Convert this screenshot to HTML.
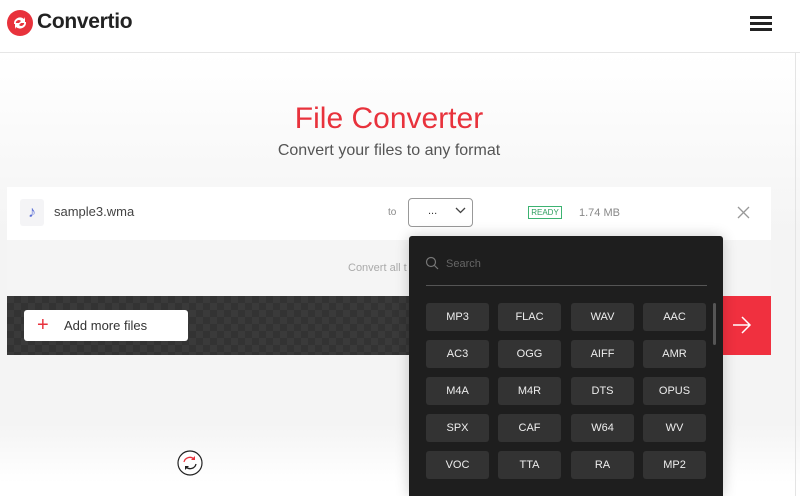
<!DOCTYPE html>
<html><head><meta charset="utf-8"><style>
*{margin:0;padding:0;box-sizing:border-box}
body{width:800px;height:496px;overflow:hidden;background:#fff;font-family:"Liberation Sans",sans-serif;position:relative}
.abs{position:absolute}
.hdr{left:0;top:0;width:800px;height:53px;background:#fff;border-bottom:1px solid #e6e6e6}
.main{left:0;top:53px;width:800px;height:443px;background:linear-gradient(#fff 0,#f4f4f4 180px,#f4f4f4 370px,#fff 430px)}
.fmt{position:absolute;width:63px;height:28px;background:#333;border-radius:3px;color:#eee;font-size:11px;text-align:center;line-height:28px}
</style></head><body>
<div class="abs hdr"></div>
<div class="abs main"></div>
<div class="abs" style="left:795px;top:53px;width:1px;height:443px;background:#e4e4e4"></div>
<svg class="abs" style="left:7px;top:10px" width="26" height="26" viewBox="0 0 26 26"><circle cx="13" cy="13" r="13" fill="#e8323c"/><path d="M7 14a6 6 0 0 1 10-5l1-2v6h-6l2-2a3 3 0 0 0-5 3z M19 12a6 6 0 0 1-10 5l-1 2v-6h6l-2 2a3 3 0 0 0 5-3z" fill="#fff"/></svg>
<div class="abs" style="left:37px;top:10px;font-size:21px;font-weight:bold;color:#222;letter-spacing:-0.3px">Convertio</div>
<div class="abs" style="left:750px;top:16px;width:22px;height:3px;background:#222;box-shadow:0 6px 0 #222,0 12px 0 #222"></div>
<div class="abs" style="left:0;width:778px;top:102px;text-align:center;font-size:30px;color:#e8323c">File Converter</div>
<div class="abs" style="left:0;width:778px;top:142px;text-align:center;font-size:16px;color:#555">Convert your files to any format</div>
<div class="abs" style="left:7px;top:187px;width:764px;height:53px;background:#fff"></div>
<div class="abs" style="left:20px;top:199px;width:24px;height:27px;background:#f4f4f6;border-radius:3px;color:#5b6fd6;font-size:16px;text-align:center;line-height:27px">♪</div>
<div class="abs" style="left:54px;top:204px;font-size:13px;color:#444">sample3.wma</div>
<div class="abs" style="left:388px;top:207px;font-size:10px;color:#888">to</div>
<div class="abs" style="left:408px;top:198px;width:65px;height:29px;border:1px solid #999;border-radius:4px;background:#fff"></div>
<div class="abs" style="left:428px;top:205px;font-size:11px;color:#333">...</div>
<svg class="abs" style="left:455px;top:207px" width="11" height="7"><path d="M1 1l4.5 4.5L10 1" stroke="#444" fill="none" stroke-width="1.3"/></svg>
<div class="abs" style="left:528px;top:206px;width:34px;height:13px;border:1px solid #3cb371;color:#2e9e5e;font-size:8px;text-align:center;line-height:11px">READY</div>
<div class="abs" style="left:579px;top:207px;font-size:11px;color:#888">1.74 MB</div>
<svg class="abs" style="left:737px;top:206px" width="13" height="13"><path d="M1 1l11 11M12 1L1 12" stroke="#999" stroke-width="1.3"/></svg>
<div class="abs" style="left:7px;top:240px;width:764px;height:56px;background:#f5f5f5"></div>
<div class="abs" style="left:348px;top:262px;font-size:11px;color:#aaa">Convert all t</div>
<div class="abs" style="left:7px;top:296px;width:764px;height:59px;background:#3a3a3a;background-image:linear-gradient(45deg,#333 25%,transparent 25%,transparent 75%,#333 75%),linear-gradient(45deg,#333 25%,transparent 25%,transparent 75%,#333 75%);background-size:14px 14px;background-position:0 0,7px 7px"></div>
<div class="abs" style="left:723px;top:296px;width:48px;height:59px;background:#f0303f"></div>
<svg class="abs" style="left:732px;top:316px" width="20" height="18"><path d="M1 9h17M10 1l8 8-8 8" stroke="#fff" fill="none" stroke-width="1.5"/></svg>
<div class="abs" style="left:24px;top:310px;width:164px;height:31px;background:#fff;border-radius:3px"></div>
<div class="abs" style="left:37px;top:315px;font-size:20px;color:#e8323c;line-height:20px">+</div>
<div class="abs" style="left:64px;top:318px;font-size:13px;color:#333">Add more files</div>
<svg class="abs" style="left:176px;top:449px" width="28" height="28"><circle cx="14" cy="14" r="12" fill="#fff" stroke="#222" stroke-width="1.2"/><path d="M8 13a6 6 0 0 1 10-3" stroke="#e8323c" fill="none" stroke-width="1.3"/><path d="M19 7v4h-4" fill="#e8323c"/><path d="M20 15a6 6 0 0 1-10 3" stroke="#222" fill="none" stroke-width="1.3"/><path d="M9 21v-4h4" fill="#222"/></svg>
<div class="abs" style="left:409px;top:236px;width:314px;height:260px;background:#1e1e1e;border-radius:3px 3px 0 0;box-shadow:0 0 14px rgba(0,0,0,.2)">
<svg style="position:absolute;left:16px;top:20px" width="14" height="14"><circle cx="6" cy="6" r="4.5" stroke="#777" fill="none" stroke-width="1.2"/><path d="M9.5 9.5l3.5 3.5" stroke="#777" stroke-width="1.2"/></svg>
<div style="position:absolute;left:37px;top:22px;font-size:11px;color:#666">Search</div>
<div style="position:absolute;left:17px;top:49px;width:281px;height:1px;background:#555"></div>
<div style="position:absolute;left:304px;top:67px;width:3px;height:42px;background:#555;border-radius:2px"></div>
<div class="fmt" style="left:17px;top:67px">MP3</div><div class="fmt" style="left:89px;top:67px">FLAC</div><div class="fmt" style="left:162px;top:67px">WAV</div><div class="fmt" style="left:234px;top:67px">AAC</div>
<div class="fmt" style="left:17px;top:104px">AC3</div><div class="fmt" style="left:89px;top:104px">OGG</div><div class="fmt" style="left:162px;top:104px">AIFF</div><div class="fmt" style="left:234px;top:104px">AMR</div>
<div class="fmt" style="left:17px;top:141px">M4A</div><div class="fmt" style="left:89px;top:141px">M4R</div><div class="fmt" style="left:162px;top:141px">DTS</div><div class="fmt" style="left:234px;top:141px">OPUS</div>
<div class="fmt" style="left:17px;top:178px">SPX</div><div class="fmt" style="left:89px;top:178px">CAF</div><div class="fmt" style="left:162px;top:178px">W64</div><div class="fmt" style="left:234px;top:178px">WV</div>
<div class="fmt" style="left:17px;top:215px">VOC</div><div class="fmt" style="left:89px;top:215px">TTA</div><div class="fmt" style="left:162px;top:215px">RA</div><div class="fmt" style="left:234px;top:215px">MP2</div>
</div>
</body></html>
